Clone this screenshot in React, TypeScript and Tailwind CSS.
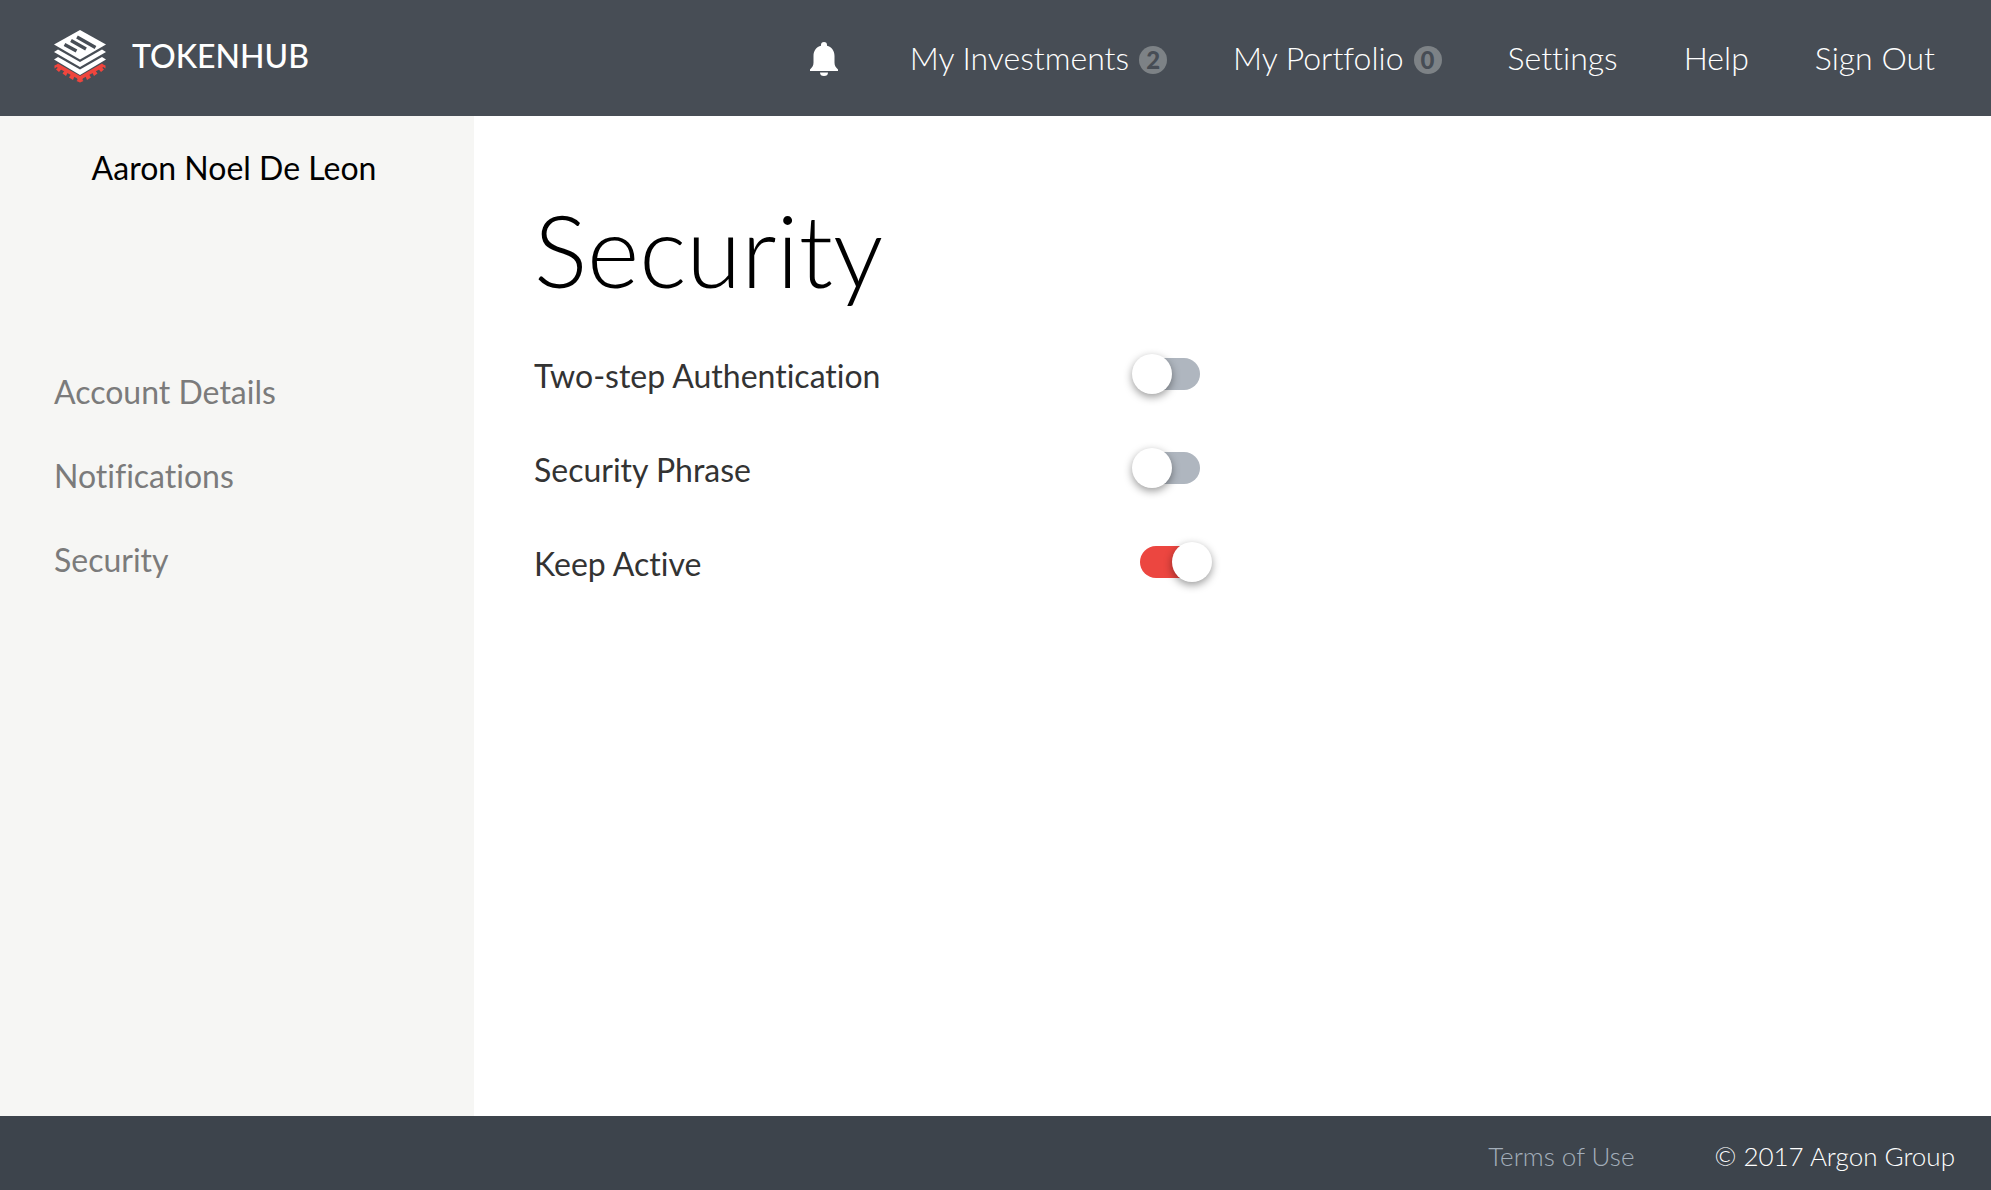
import { useState } from "react";

function Logo() {
  return (
    <svg viewBox="0 0 52 53" className="h-[53px] w-[52px] shrink-0" aria-hidden="true">
      <path fill="#ef453d" d="M0.500 36 4 33.500 26 46 48 33.500 51.500 36 26 50Z" />
      <path
        fill="#ef453d"
        d="M23 47 29 47 28.500 50 29.500 51 26 52.500 22.500 51 23.500 50ZM31 45 34.500 43.500 37 47.500 33 50ZM38 42 41 40 43.500 43.500 40 46ZM44 38.500 47 36.500 50 39.500 47 42ZM48 35 51.500 35.500V38.500L50 37.500ZM21 45 17.500 43.500 15 47.500 19 50ZM14 42 11 40 8.500 43.500 12 46ZM8 38.500 5 36.500 2 39.500 5 42ZM4 35 0.500 35.500V38.500L2 37.500Z"
      />
      <g fill="#fff">
        <path d="M26 0 52 14.500 26 29.500 0 14.500Z" />
        <path d="M0 22 4 19.500 26 32 48 19.500 52 22 26 37Z" />
        <path d="M0 29.500 4 27 26 39.500 48 27 52 29.500 26 45Z" />
      </g>
      <path
        stroke="#474d55"
        strokeWidth="3.400"
        d="M10.500 14.500 22.500 21M17 10.500 32 19M23 7 41.500 17.500"
      />
    </svg>
  );
}

function Bell() {
  return (
    <svg viewBox="0 0 28 34" className="h-[34px] w-7" fill="#fff" aria-hidden="true">
      <path d="M14 0a3 3 0 0 0-3 3v.8C6.500 5 3.500 8.500 3.500 14v6.500c0 3-1 4.500-3.500 7V29h28v-1.500c-2.500-2.500-3.500-4-3.500-7V14c0-5.500-3-9-7.500-10.200V3a3 3 0 0 0-3-3ZM10 30.500a4 3.500 0 0 0 8 0Z" />
    </svg>
  );
}

function NavLink({ label, count }: { label: string; count?: number }) {
  return (
    <a href="#" className="flex items-center gap-2.5 whitespace-nowrap">
      {label}
      {count !== undefined && (
        <span className="mt-1 flex size-7 items-center justify-center rounded-full bg-[#7d8286] text-2xl font-black text-[#474d55]">
          {count}
        </span>
      )}
    </a>
  );
}

function Toggle({ label, initial }: { label: string; initial: boolean }) {
  const [on, setOn] = useState(initial);
  return (
    <label className="flex h-[94px] cursor-pointer items-center">
      <span className="w-[606px] text-[#333]">{label}</span>
      <input
        type="checkbox"
        role="switch"
        checked={on}
        onChange={(e) => setOn(e.target.checked)}
        className="peer sr-only"
      />
      <span
        className={`relative mb-1 h-8 w-[60px] rounded-full peer-focus-visible:outline-2 ${on ? "bg-[#ec4640]" : "bg-[#afb6bf]"}`}
      >
        <span
          className={`absolute -top-1 size-10 rounded-full bg-white shadow-[0_3px_8px_rgba(0,0,0,0.4)] ${on ? "left-8" : "-left-2"}`}
        />
      </span>
    </label>
  );
}

export default function App() {
  return (
    <div className="flex min-h-screen flex-col bg-white font-['Lato',sans-serif] text-[32px] leading-10 [font-variant-ligatures:none]">
      <header className="flex h-[116px] items-center justify-between bg-[#474d55] pr-14 pl-[54px] text-white">
        <a href="#" className="flex items-center gap-[26px] pb-1">
          <Logo />
          <span className="font-medium">TOKENHUB</span>
        </a>
        <nav className="flex items-center gap-[66px] font-light">
          <button type="button" aria-label="Alerts" className="mt-0.5 mr-1.5">
            <Bell />
          </button>
          <NavLink label="My Investments" count={2} />
          <NavLink label="My Portfolio" count={0} />
          <NavLink label="Settings" />
          <NavLink label="Help" />
          <NavLink label="Sign Out" />
        </nav>
      </header>
      <div className="flex flex-1">
        <aside className="w-[474px] shrink-0 bg-[#f6f6f4] pt-8">
          <p className="pr-1.5 text-center text-black">Aaron Noel De Leon</p>
          <nav className="mt-[184px] flex flex-col gap-11 pl-[54px] text-[#7b7b7b]">
            <a href="#">Account Details</a>
            <a href="#">Notifications</a>
            <a href="#">Security</a>
          </nav>
        </aside>
        <main className="flex-1 pt-[73px] pl-[60px]">
          <h1 className="text-[100px] leading-[120px] font-light text-black">Security</h1>
          <div className="mt-5">
            <Toggle label="Two-step Authentication" initial={false} />
            <Toggle label="Security Phrase" initial={false} />
            <Toggle label="Keep Active" initial={true} />
          </div>
        </main>
      </div>
      <footer className="flex h-[74px] items-center justify-end gap-20 bg-[#3d444c] pt-1.5 pr-9 text-[26px] font-light">
        <a href="#" className="text-[#a3aeba]">Terms of Use</a>
        <span className="text-white">© 2017 Argon Group</span>
      </footer>
    </div>
  );
}
